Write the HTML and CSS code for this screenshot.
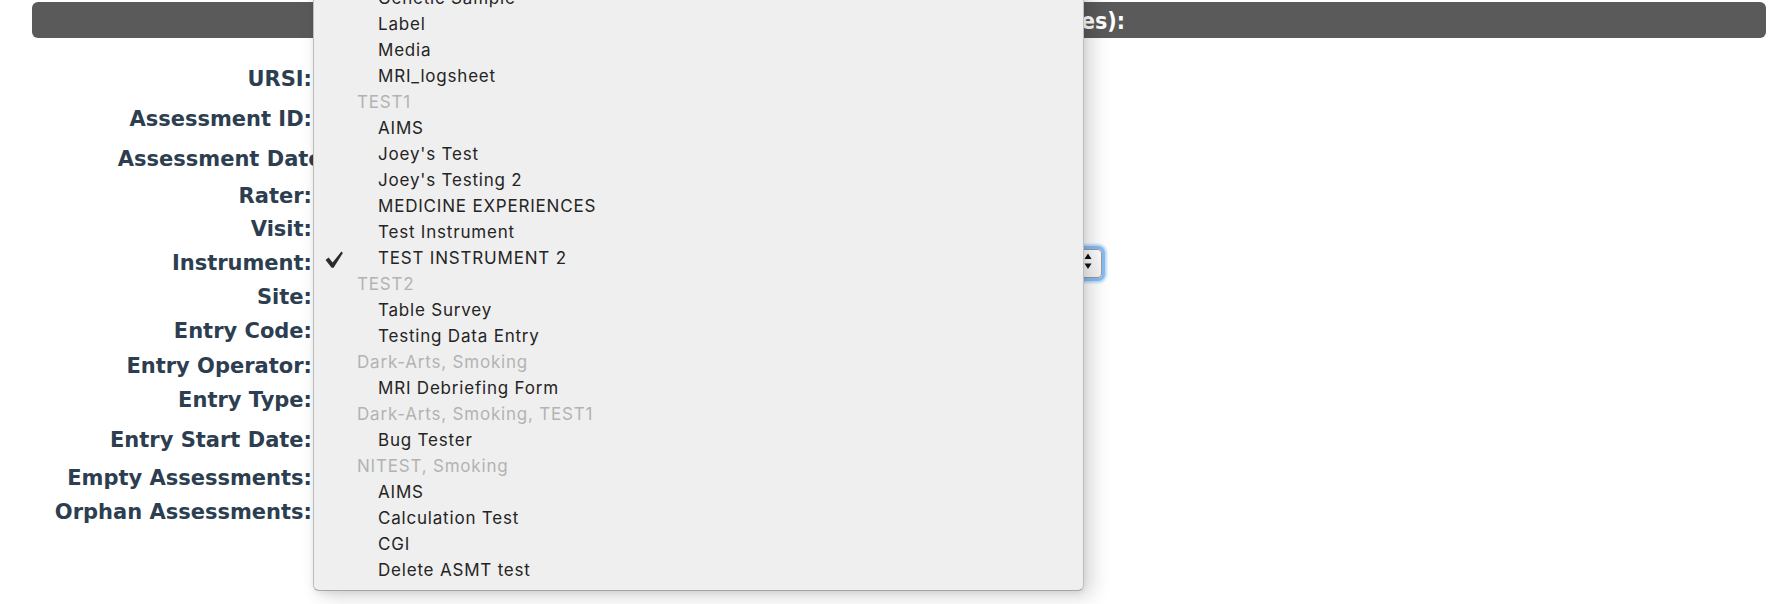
FILE: index.html
```html
<!DOCTYPE html>
<html lang="en">
<head>
<meta charset="utf-8">
<title>Assessment Search</title>
<link rel="stylesheet" href="styles.css">
</head>
<body>
<div class="page">
  <div class="titlebar"><span>Search Assessments (by any of these properties):</span></div>
  <div class="form">
    <div class="row h40"><div class="lbl">URSI:</div></div>
    <div class="row h40"><div class="lbl">Assessment ID:</div></div>
    <div class="row h37"><div class="lbl lbl-wide">Assessment Date:</div></div>
    <div class="row h33"><div class="lbl">Rater:</div></div>
    <div class="row h34"><div class="lbl">Visit:</div></div>
    <div class="row h34">
      <div class="lbl">Instrument:</div>
      <div class="select">
        <svg class="arrows" width="8" height="16" viewBox="0 0 8 16"><polygon points="0.5,6 4,0.5 7.5,6" fill="#111"/><polygon points="0.5,10.5 7.5,10.5 4,16" fill="#111"/></svg>
      </div>
    </div>
    <div class="row h34"><div class="lbl">Site:</div></div>
    <div class="row h35"><div class="lbl">Entry Code:</div></div>
    <div class="row h34"><div class="lbl">Entry Operator:</div></div>
    <div class="row h40"><div class="lbl">Entry Type:</div></div>
    <div class="row h38"><div class="lbl">Entry Start Date:</div></div>
    <div class="row h34"><div class="lbl">Empty Assessments:</div></div>
    <div class="row h34"><div class="lbl">Orphan Assessments:</div></div>
  </div>
</div>

<div class="menu">
  <div class="opt">Genetic Sample</div>
  <div class="opt">Label</div>
  <div class="opt">Media</div>
  <div class="opt">MRI_logsheet</div>
  <div class="grp">TEST1</div>
  <div class="opt">AIMS</div>
  <div class="opt">Joey's Test</div>
  <div class="opt">Joey's Testing 2</div>
  <div class="opt">MEDICINE EXPERIENCES</div>
  <div class="opt">Test Instrument</div>
  <div class="opt opt-sel"><span class="mark"><svg width="18" height="18" viewBox="0 0 18 18"><polygon points="0.6,9 3.6,6.4 7.6,11.4 16.4,0.6 17.9,1.9 8.6,16.8 6.6,16.8" fill="#2b2b2b"/></svg></span>TEST INSTRUMENT 2</div>
  <div class="grp">TEST2</div>
  <div class="opt">Table Survey</div>
  <div class="opt">Testing Data Entry</div>
  <div class="grp">Dark-Arts, Smoking</div>
  <div class="opt">MRI Debriefing Form</div>
  <div class="grp">Dark-Arts, Smoking, TEST1</div>
  <div class="opt">Bug Tester</div>
  <div class="grp">NITEST, Smoking</div>
  <div class="opt">AIMS</div>
  <div class="opt">Calculation Test</div>
  <div class="opt">CGI</div>
  <div class="opt">Delete ASMT test</div>
</div>
</body>
</html>
```
FILE: styles.css
```css
html, body {
  margin: 0;
  padding: 0;
  background: #ffffff;
  overflow: hidden;
}

body {
  position: relative;
  height: 604px;
  font-family: "DejaVu Sans", Verdana, sans-serif;
}

.page {
  padding: 2px 26px 0 32px;
}

.titlebar {
  box-sizing: border-box;
  height: 36px;
  background: #5a5a5a;
  border-radius: 6px;
  color: #ffffff;
  font-family: "DejaVu Sans Condensed", "DejaVu Sans", sans-serif;
  font-weight: bold;
  font-size: 23px;
  line-height: 33px;
  padding: 3px 641px 0 0;
  text-align: right;
  white-space: nowrap;
  overflow: hidden;
}

.form {
  padding-top: 29px;
}

.row {
  display: flex;
  align-items: flex-start;
}

.h33 { height: 33px; }
.h34 { height: 34px; }
.h35 { height: 35px; }
.h37 { height: 37px; }
.h38 { height: 38px; }
.h40 { height: 40px; }

.lbl {
  flex: none;
  width: 280px;
  text-align: right;
  white-space: nowrap;
  font-family: "DejaVu Sans", Verdana, sans-serif;
  font-weight: bold;
  font-size: 21px;
  line-height: 24px;
  color: #2c3e50;
}

.lbl-wide {
  width: 299px;
  margin-right: -19px;
}

.select {
  box-sizing: border-box;
  flex: none;
  display: flex;
  align-items: center;
  justify-content: flex-end;
  width: 780px;
  height: 29px;
  margin: -2px 0 0 10px;
  padding: 0 9px 0 10px;
  background: linear-gradient(#ffffff, #f4f4f4);
  border: 1px solid #9c9c9c;
  border-radius: 4px;
  box-shadow: 0 0 0 3px #86bbf4, 0 0 2px 5px rgba(140, 190, 245, 0.55);
}

.arrows {
  margin-top: -5px;
}

/* native popup menu overlay */
.menu {
  position: absolute;
  left: 313px;
  top: -19px;
  box-sizing: border-box;
  width: 771px;
  padding: 3px 0 7px;
  background: #efefef;
  border: 1px solid #bdbdbd;
  border-bottom-color: #a6a6a6;
  border-radius: 6px;
  box-shadow: 8px 5px 20px rgba(0, 0, 0, 0.16), 0 2px 6px rgba(0, 0, 0, 0.08);
  font-family: "Inter", "Liberation Sans", sans-serif;
  font-size: 17px;
  letter-spacing: 0.8px;
}

.opt,
.grp {
  display: flex;
  align-items: center;
  height: 26px;
  line-height: 26px;
  white-space: nowrap;
}

.opt {
  padding-left: 64px;
  color: #242424;
}

.grp {
  padding-left: 43px;
  color: #b3b3b3;
}

.opt-sel {
  padding-left: 11px;
}

.mark {
  flex: none;
  display: flex;
  width: 53px;
}

.mark svg {
  margin-top: 4px;
}
```
